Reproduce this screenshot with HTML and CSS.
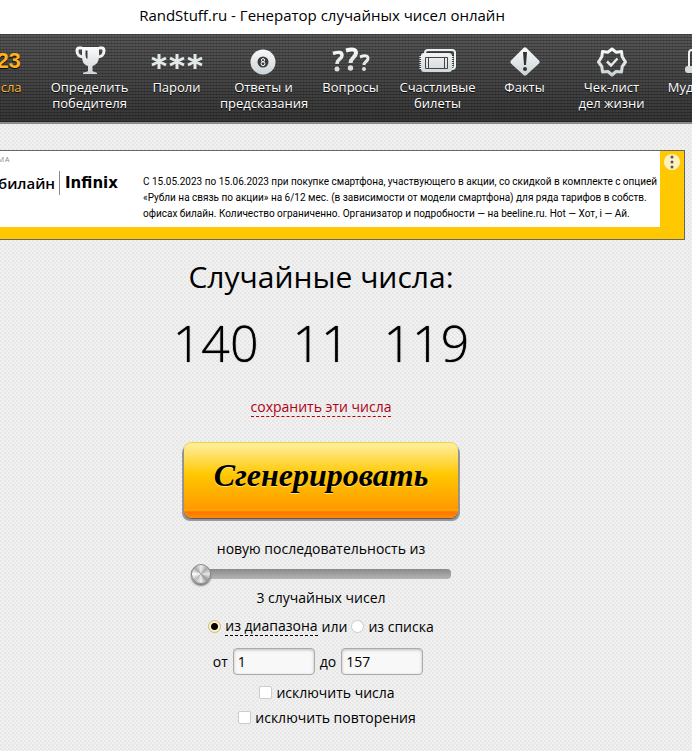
FILE: index.html
```html
<!DOCTYPE html>
<html lang="ru">
<head>
  <meta charset="UTF-8" />
  <meta name="viewport" content="width=device-width, initial-scale=1" />
  <title>RandStuff.ru - Генератор случайных чисел онлайн</title>
  <link rel="stylesheet" href="styles.css">
</head>
<body>
  <!-- shared icon fill -->
  <svg class="defs" width="0" height="0" aria-hidden="true">
    <linearGradient id="silver" x1="0" y1="0" x2="0" y2="32" gradientUnits="userSpaceOnUse">
      <stop offset="0" stop-color="#ffffff" />
      <stop offset="1" stop-color="#c8d0d4" />
    </linearGradient>
  </svg>

  <header class="site-title">RandStuff.ru - Генератор случайных чисел онлайн</header>

  <nav class="menu">
    <a class="menu-item active" href="#">
      <span class="icon icon-digits">123</span>
      Числа
    </a>
    <a class="menu-item" href="#">
      <svg class="icon" viewBox="0 0 44 32">
        <path d="M14 2h17v9c0 6-3 9-6.500 10v5c0 1 4.500 1 4.500 2v1H15v-1c0-1 5-1 5-2v-5c-4-1-6-4-6-10z" fill="url(#silver)" />
        <path d="M14 3h-3q-2 0-2 3c0 4 3 6 7 6M31 3h3q2 0 2 3c0 4-3 6-7 6" fill="none" stroke="url(#silver)" stroke-width="3" />
        <path d="M17.500 5.500h2V14q-2-1-2-4z" fill="#3a3a3a" />
      </svg>
      Определить победителя
    </a>
    <a class="menu-item" href="#">
      <svg class="icon icon-wide" viewBox="0 0 54 32">
        <path d="M9 9v15M2 13l14 7M16 13L2 20M27 9v15M20 13l14 7M34 13l-14 7M45 9v15M38 13l14 7M52 13l-14 7" stroke="#e3e8ea" stroke-width="3" />
      </svg>
      Пароли
    </a>
    <a class="menu-item" href="#">
      <svg class="icon" viewBox="0 0 44 32">
        <circle cx="21" cy="17" r="12.500" fill="url(#silver)" />
        <circle cx="21" cy="17" r="5.500" fill="#3c3c3c" />
        <circle cx="21" cy="15.200" r="1.600" fill="none" stroke="#fff" />
        <circle cx="21" cy="18.700" r="1.900" fill="none" stroke="#fff" />
      </svg>
      Ответы и предсказания
    </a>
    <a class="menu-item" href="#">
      <svg class="icon" viewBox="0 0 44 32">
        <g fill="none" stroke="url(#silver)" stroke-width="3.500">
          <path d="M4 8.500q9-3 9 2c0 3.500-5 3.500-5 8.500" />
          <path d="M17 5.500q10-3 10 2.500c0 4-5.500 5-5.500 10" stroke-width="4" />
          <path d="M31 12q8-3 8 1.500c0 3-4 3-4 6.500" stroke-width="3" />
        </g>
        <g fill="#d9dfe2">
          <circle cx="8" cy="24" r="2.500" />
          <circle cx="21.500" cy="23" r="2.700" />
          <circle cx="35" cy="24" r="2" />
        </g>
      </svg>
      Вопросы
    </a>
    <a class="menu-item" href="#">
      <svg class="icon" viewBox="0 0 44 32">
        <path d="M9 8q0-3 3-3h24q3 0 3 3v13q0 3-3 3" fill="none" stroke="#eef1f2" stroke-width="2" />
        <path d="M39 7v16" stroke="#eef1f2" stroke-width="2" stroke-dasharray="1 1" />
        <path d="M5 11v13M36 11v13" stroke="#eef1f2" stroke-width="3" stroke-dasharray="1 1" />
        <rect x="5" y="8" width="31" height="19" rx="3" fill="url(#silver)" />
        <path d="M9.500 12.500h22v11h-22zM12.500 12.500v11M28.500 12.500v11" fill="none" stroke="#444" />
      </svg>
      Счастливые билеты
    </a>
    <a class="menu-item" href="#">
      <svg class="icon" viewBox="0 0 44 32">
        <path d="M20.500 3q1.500-1.500 3 0l12.500 12.500q1.500 1.500 0 3L23.500 30q-1.500 1.500-3 0L8 18.500q-1.500-1.500 0-3z" fill="url(#silver)" />
        <path d="M20 7h4l-1 13h-2z" fill="#333" />
        <circle cx="22" cy="24" r="2" fill="#333" />
      </svg>
      Факты
    </a>
    <a class="menu-item" href="#">
      <svg class="icon" viewBox="0 0 44 32">
        <path d="M22 4l4 3.200 5.500-.700.700 5.200L35.500 17l-3.300 4.500-.700 5.500-5.500-.500L22 30l-4-3.500-5.500.500-.700-5.500L8.500 17l3.300-5.300.700-5.200 5.500.700z" fill="none" stroke="url(#silver)" stroke-width="3" stroke-linejoin="round" />
        <path d="M17 16.500l4 4 6.500-7" fill="none" stroke="#e6ebed" stroke-width="2.500" />
      </svg>
      Чек-лист<br>дел жизни
    </a>
    <a class="menu-item" href="#">
      <svg class="icon" viewBox="0 0 44 32">
        <path d="M12 23V8q0-3 3-3h18v18" fill="none" stroke="#eef1f2" stroke-width="2" />
        <path d="M16 12h13M16 16h13" stroke="#eef1f2" />
        <rect x="8" y="21" width="27" height="7" rx="3" fill="#d3dade" />
      </svg>
      Мудрость
    </a>
  </nav>

  <aside class="banner">
    <div class="banner-body">
      <div class="ad-mark">РЕКЛАМА</div>
      <div class="banner-row">
        <div class="brands">
          <span class="beeline">билайн</span>
          <span class="infinix">Infinix</span>
        </div>
        <p class="legal">
          С 15.05.2023 по 15.06.2023 при покупке смартфона, участвующего в акции, со скидкой в комплекте с опцией<br>
          «Рубли на связь по акции» на 6/12 мес. (в зависимости от модели смартфона) для ряда тарифов в собств.<br>
          офисах билайн. Количество ограниченно. Организатор и подробности — на beeline.ru. Hot — Хот, i — Ай.
        </p>
      </div>
    </div>
    <button class="banner-menu" type="button" aria-label="Меню рекламы">
      <svg width="16" height="16" viewBox="0 0 16 16" fill="#555">
        <circle cx="8" cy="3" r="1.500" />
        <circle cx="8" cy="8" r="1.500" />
        <circle cx="8" cy="13" r="1.500" />
      </svg>
    </button>
  </aside>

  <main class="generator">
    <h1>Случайные числа:</h1>
    <div class="numbers"><span>140</span><span>11</span><span>119</span></div>
    <a class="save" href="#">сохранить эти числа</a>

    <form class="options">
      <button class="generate" type="button">Сгенерировать</button>
      <label class="caption" for="count">новую последовательность из</label>
      <input class="slider" type="range" id="count" min="3" max="20" value="3" />
      <div class="caption">3 случайных чисел</div>

      <div class="row source">
        <input type="radio" name="source" id="range" checked />
        <label class="chosen" for="range">из диапазона</label>
        <span>или</span>
        <input type="radio" name="source" id="list" />
        <label for="list">из списка</label>
      </div>
      <div class="row limits">
        <label for="from">от</label>
        <input type="text" id="from" value="1" />
        <label for="to">до</label>
        <input type="text" id="to" value="157" />
      </div>
      <div class="row check">
        <input type="checkbox" id="exclude" />
        <label for="exclude">исключить числа</label>
      </div>
      <div class="row check">
        <input type="checkbox" id="unique" />
        <label for="unique">исключить повторения</label>
      </div>
    </form>
  </main>
</body>
</html>
```
FILE: styles.css
```css
* { box-sizing: border-box; margin: 0; padding: 0; }
body {
  min-height: 100vh;
  overflow-x: hidden;
  font-family: "Open Sans", "Noto Sans", sans-serif;
  font-size: 14px;
  color: #000;
  /* woven paper texture */
  background:
    radial-gradient(circle at 1px 1px, #e6e6e6 1px, transparent 1px) 0 0 / 4px 4px,
    radial-gradient(circle at 1px 1px, #e9e9e9 1px, transparent 1px) 2px 2px / 4px 4px,
    #f1f1f1;
}
.defs { position: absolute; }

.site-title {
  height: 34px;
  padding-right: 48px;
  background: #fff;
  font-size: 15px;
  line-height: 30px;
  text-align: center;
}

/* Menu */
.menu {
  display: flex;
  height: 90px;
  padding-top: 11px;
  overflow: hidden;
  border-bottom: 2px solid #8a8a8a;
  background:
    repeating-linear-gradient(rgba(0,0,0,0.25) 0 1px, transparent 1px 3px),
    repeating-linear-gradient(90deg, rgba(0,0,0,0.1) 0 1px, transparent 1px 3px),
    linear-gradient(#565656, #363636);
}
.menu-item {
  flex: none;
  width: 87px;
  color: #fff;
  font-size: 13px;
  line-height: 16px;
  text-align: center;
  text-decoration: none;
  text-shadow: 0 1px 1px #000;
}
.menu-item:first-child { margin-left: -41px; }
.icon {
  display: block;
  width: 44px;
  height: 32px;
  margin: 0 auto 2px;
}
.icon-wide { width: 54px; }
.active { color: #ffb833; }
.icon-digits {
  color: #ffb31a;
  font: bold 22px/32px "Liberation Sans", sans-serif;
}

/* Banner */
.banner {
  display: flex;
  justify-content: space-between;
  height: 90px;
  margin: 26px 7px 0 -20px;
  border: 1px solid #666;
  background: #ffc800;
}
.banner-body {
  flex: 1;
  min-width: 0;
  height: 76px;
  background: #fff;
  white-space: nowrap;
}
.ad-mark {
  height: 16px;
  margin-left: -10px;
  color: #888;
  font-size: 7px;
  line-height: 18px;
  letter-spacing: 1px;
}
.banner-row { display: flex; gap: 22px; }
.brands {
  display: flex;
  flex: none;
  align-items: center;
  width: 140px;
  height: 32px;
  padding-left: 17px;
  font-size: 15px;
  font-weight: 600;
}
.infinix {
  margin-left: 4px;
  padding-left: 5px;
  border-left: 1px solid #888;
  font: bold 15px/24px "DejaVu Sans", sans-serif;
}
.legal {
  padding-top: 7px;
  font: 10px/16px Roboto, "Open Sans", sans-serif;
}
.banner-menu {
  flex: none;
  width: 16px;
  height: 16px;
  margin: 3px 4px;
  border: none;
  border-radius: 50%;
  background: #fff1bf;
  cursor: pointer;
}

/* Generator */
.generator {
  padding: 14px 50px 20px 0;
  text-align: center;
}
h1 {
  font-size: 30px;
  font-weight: 400;
  line-height: 46px;
}
.numbers {
  display: flex;
  justify-content: center;
  gap: 34px;
  margin-top: 10px;
  font-size: 50px;
  font-weight: 300;
  line-height: 66px;
  text-shadow: 0 0 1px #000;
}
.save {
  display: inline-block;
  margin-top: 22px;
  border-bottom: 1px dashed #b00;
  color: #b00015;
  line-height: 18px;
  text-decoration: none;
}
.options {
  display: flex;
  flex-direction: column;
  align-items: center;
}
.generate {
  width: 274px;
  height: 76px;
  margin-top: 25px;
  padding-bottom: 10px;
  border: none;
  border-top: 1px solid #ffd028;
  border-radius: 8px;
  background: linear-gradient(#fff0a4, #ffc800 42%, #ff9900 88%, #ffb000 89%, #ff7800 92%, #ff8a00);
  box-shadow: 0 1px 1px #555, -2px 3px 0 #999, 2px 3px 0 #999;
  font: italic bold 32px "Liberation Serif", serif;
  text-shadow: 0 1px 0 #ffdd77;
  cursor: pointer;
}
.caption { line-height: 24px; }
.generate + .caption { margin-top: 19px; }
.slider {
  width: 260px;
  height: 25px;
  appearance: none;
  background: none;
}
.slider::-webkit-slider-runnable-track {
  height: 10px;
  border-radius: 4px;
  background: linear-gradient(#898989, #b5b5b5);
}
.slider::-webkit-slider-thumb {
  width: 20px;
  height: 20px;
  margin-top: -5px;
  appearance: none;
  border: 1px solid #888;
  border-radius: 50%;
  background: conic-gradient(#eee, #aaa, #e8e8e8, #999, #eee, #bbb, #fff, #aaa, #eee);
  box-shadow: 0 2px 2px #777;
}
.row {
  display: flex;
  justify-content: center;
  align-items: center;
  gap: 4px;
  height: 25px;
}
.source { height: 32px; }
.chosen {
  border-bottom: 1px dashed #000;
  line-height: 18px;
}
input[type="radio"] {
  width: 13px;
  height: 13px;
  appearance: none;
  border: 1px solid #ccc;
  border-radius: 50%;
  background: #fff;
}
input[type="radio"]:checked {
  border-color: #cbb98d;
  background: radial-gradient(#000 3px, #fff0c4 4px);
}
.limits {
  height: 38px;
  padding-right: 6px;
  gap: 5px;
}
.check { padding-left: 12px; }
input[type="text"] {
  width: 82px;
  height: 27px;
  padding: 0 4px;
  border: 1px solid #aaa;
  border-radius: 4px;
  background: #f8f8f8;
  box-shadow: inset 0 1px 3px #bbb;
  font: 14px "Open Sans", sans-serif;
}
input[type="checkbox"] {
  width: 13px;
  height: 13px;
  appearance: none;
  border: 1px solid #ccc;
  border-radius: 2px;
  background: #fff;
}
```
